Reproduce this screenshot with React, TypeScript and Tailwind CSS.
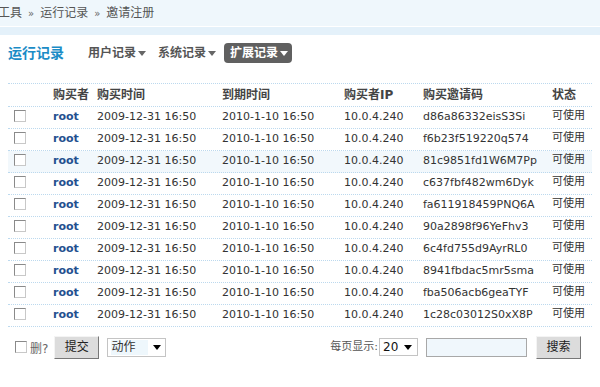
import React from "react";

const rows = [
  "d86a86332eisS3Si",
  "f6b23f519220q574",
  "81c9851fd1W6M7Pp",
  "c637fbf482wm6Dyk",
  "fa611918459PNQ6A",
  "90a2898f96YeFhv3",
  "6c4fd755d9AyrRL0",
  "8941fbdac5mr5sma",
  "fba506acb6geaTYF",
  "1c28c03012S0xX8P",
];

const font = { fontFamily: '"DejaVu Sans", "Noto Sans CJK SC", sans-serif' };

function Box() {
  return (
    <span className="inline-block w-[12px] h-[12px] border border-[#8a8a8a] border-r-[#c8c8c8] border-b-[#c8c8c8] bg-white" />
  );
}

function Caret({ className = "" }: { className?: string }) {
  return (
    <svg width="8" height="6" viewBox="0 0 8 6" className={className}>
      <path d="M0 1h8L4 6z" fill="currentColor" />
    </svg>
  );
}

const grid = "grid grid-cols-[45px_44px_125px_122px_79px_129px_1fr] items-center";

export default function App() {
  return (
    <div className="w-[600px] h-[387px] bg-white overflow-hidden text-[#333]" style={font}>
      <div className="h-[26px] bg-[#eff7fc] flex items-center -ml-[2px] text-[12px] text-[#555]">
        <span>工具</span>
        <span className="mx-[6px] text-[10px] text-[#666]">»</span>
        <span>运行记录</span>
        <span className="mx-[6px] text-[10px] text-[#666]">»</span>
        <span>邀请注册</span>
      </div>
      <div className="h-[1px] bg-white" />
      <div className="h-[8px] bg-[#e4f1fa]" />
      <div className="flex items-center h-[36px] pl-[8px]">
        <span className="text-[14px] font-bold text-[#1b8cc6] w-[80px]">运行记录</span>
        <span className="flex items-center text-[12px] font-bold text-[#555]">
          用户记录<Caret className="ml-[2px] text-[#666]" />
        </span>
        <span className="flex items-center text-[12px] font-bold text-[#555] ml-[12px]">
          系统记录<Caret className="ml-[2px] text-[#666]" />
        </span>
        <span className="flex items-center text-[12px] font-bold text-white bg-[#606060] rounded-[4px] h-[20px] pl-[6px] pr-[4px] ml-[8px]">
          扩展记录<Caret className="ml-[2px] text-white" />
        </span>
      </div>
      <div className="mx-[8px] mt-[12px] border-t border-dotted border-[#bcd9ee]">
        <div className={`${grid} h-[23px] border-b border-dotted border-[#bcd9ee] text-[12px] font-bold text-[#444]`}>
          <span />
          <span>购买者</span>
          <span>购买时间</span>
          <span>到期时间</span>
          <span>购买者IP</span>
          <span>购买邀请码</span>
          <span>状态</span>
        </div>
        {rows.map((code, i) => (
          <div
            key={code}
            className={`${grid} h-[22px] border-b border-dotted border-[#bcd9ee] text-[11px] ${i === 2 ? "bg-[#f2f8fc]" : ""}`}
          >
            <span className="pl-[6px] flex items-center -mt-[3px]"><Box /></span>
            <span className="font-bold text-[#24508f]">root</span>
            <span>2009-12-31 16:50</span>
            <span>2010-1-10 16:50</span>
            <span>10.0.4.240</span>
            <span>{code}</span>
            <span className="-mt-[3px]">可使用</span>
          </div>
        ))}
      </div>
      <div className="flex items-center justify-between mt-[7px] pl-[15px] pr-[19px] h-[26px] text-[12px]">
        <div className="flex items-center">
          <Box />
          <span className="ml-[3px] text-[#666] mt-[3px]">删?</span>
          <button className="ml-[6px] w-[45px] h-[23px] bg-[#dcdcdc] border border-[#f4f4f4] border-r-[#777] border-b-[#777] text-[12px] text-[#222]">
            提交
          </button>
          <div className="ml-[8px] w-[59px] h-[19px] border border-[#c4c4c4] bg-white flex items-center pl-[3px] pr-[4px] justify-between">
            <span className="bg-[#eef7fc] w-[37px] leading-[15px] text-[#333]">动作</span>
            <Caret className="text-black" />
          </div>
        </div>
        <div className="flex items-center">
          <span className="text-[#555] text-[11px]">每页显示:</span>
          <div className="ml-[1px] w-[39px] h-[18px] border border-[#c4c4c4] bg-white flex items-center pl-[3px] pr-[5px] justify-between">
            <span className="text-[12px] text-[#111]">20</span>
            <Caret className="text-black" />
          </div>
          <div className="ml-[8px] w-[101px] h-[19px] border border-[#a8a8a8] bg-[#f0f7fc]" />
          <button className="ml-[9px] w-[45px] h-[23px] bg-[#dcdcdc] border border-[#f4f4f4] border-r-[#777] border-b-[#777] text-[12px] text-[#222]">
            搜索
          </button>
        </div>
      </div>
    </div>
  );
}
